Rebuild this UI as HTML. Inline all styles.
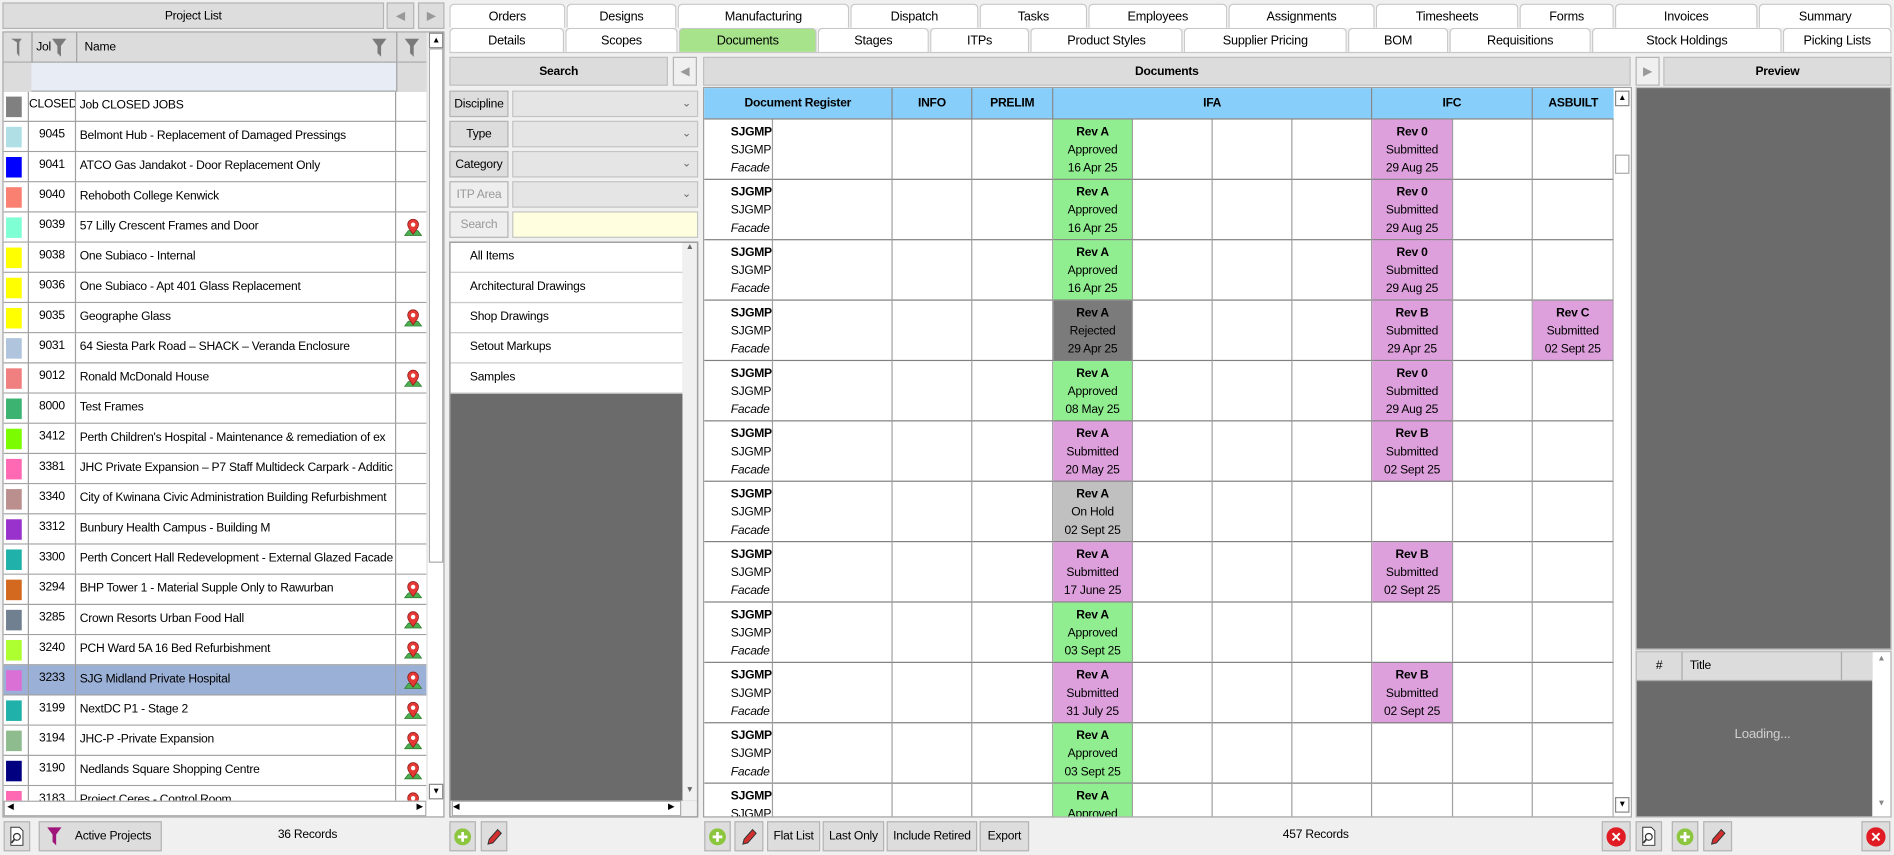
<!DOCTYPE html>
<html><head><meta charset="utf-8"><style>
*{box-sizing:border-box;margin:0;padding:0}
html,body{width:1894px;height:855px;overflow:hidden;background:#f0f0f0}
#s{position:absolute;left:0;top:0;width:1568px;height:708px;transform:scale(1.20791,1.2076);transform-origin:0 0;font-family:"Liberation Sans",sans-serif;font-size:10px;letter-spacing:-0.2px;color:#000;background:#f0f0f0}
.a{position:absolute}
.btn{position:absolute;background:#dddddd;border:1px solid #b4b4b4;display:flex;align-items:center;justify-content:center;white-space:nowrap}
.hd{position:absolute;background:#dcdcdc;border:1px solid #c0c0c0;display:flex;align-items:center;justify-content:center;font-weight:bold}
.tab{position:absolute;height:20px;background:#fff;border:1px solid #c8c8c8;border-bottom:none;border-radius:4px 4px 0 0;display:flex;align-items:center;justify-content:center;font-size:10.5px}
.pr{position:absolute;left:0;width:350px;height:25px;border-bottom:1px solid #a0a0a0;background:#fff}
.pr .sw{position:absolute;left:2px;top:4px;width:13px;height:17px}
.pr .j{position:absolute;left:20px;width:40px;top:0;height:25px;line-height:22px;text-align:center;border-left:1px solid #a0a0a0;border-right:1px solid #a0a0a0;overflow:hidden}
.pr .n{position:absolute;left:60px;width:265px;top:0;height:25px;line-height:24px;padding-left:3px;white-space:nowrap;overflow:hidden;border-right:1px solid #a0a0a0}
.pr svg{position:absolute;left:331px;top:5px}
.dr{position:absolute;left:0;width:753px;height:50px}
.dr>div{position:absolute;top:0;height:50px;border-right:1px solid #a0a0a0;border-bottom:1px solid #808080}
.x0{left:0;width:57px;padding-left:22px;line-height:15px;padding-top:3px;white-space:nowrap;overflow:hidden}
.x1{left:57px;width:99px}.x2{left:156px;width:66px}.x3{left:222px;width:67px}.x4{left:289px;width:66px}.x5{left:355px;width:66px}.x6{left:421px;width:66px}.x7{left:487px;width:66px}.x8{left:553px;width:67px}.x9{left:620px;width:66px}.x10{left:686px;width:67px}
.g{background:#90ee90}.p{background:#dda0dd}.d{background:#7b7b7b}.l{background:#c0c0c0}
.c{text-align:center;line-height:15px;padding-top:3px}
b{font-weight:bold}
.f{position:absolute;left:372px;width:49px;height:22px}
.cb{position:absolute;left:424px;width:154px;height:22px;background:#e5e5e5;border:1px solid #c4c4c4;text-align:right;padding-right:5px;line-height:18px;color:#666;font-size:9px}
.li{position:absolute;left:0;width:192px;height:25px;border-bottom:1px solid #c8c8c8;line-height:24px;padding-left:16px;background:#fff}
</style></head><body><div id="s">
<svg width="0" height="0" style="position:absolute"><defs><g id="pin"><path d="M1 14 L4 10 L12 10 L15 14 Z" fill="#4caf50" stroke="#2a7a2a" stroke-width=".6"/><path d="M8 13 C5 9 3.5 7 3.5 5 A4.5 4.5 0 0 1 12.5 5 C12.5 7 11 9 8 13Z" fill="#e53935" stroke="#8b1a1a" stroke-width=".6"/><circle cx="8" cy="5" r="1.8" fill="#fff"/></g>
<g id="fun"><path d="M0 0H12L7.5 6V15L4.5 12V6Z" fill="#7a7a7a"/></g>
<g id="dsr"><path d="M3 1H10L13 4V16H3Z" fill="#fff" stroke="#333" stroke-width=".8"/><circle cx="8" cy="9" r="2.8" fill="none" stroke="#333" stroke-width="1"/><path d="M6 11L3.5 14" stroke="#333" stroke-width="1.4"/></g>
<g id="add"><circle cx="7" cy="7" r="7" fill="#8cc63f"/><path d="M7 3v8M3 7h8" stroke="#fff" stroke-width="2.2"/></g>
<g id="ed"><path d="M2 13l1-4 7-8 3 3-7 8z" fill="#d32f2f" stroke="#333" stroke-width=".8"/></g>
<g id="del"><circle cx="8" cy="8" r="8" fill="#e01b24"/><path d="M5 5l6 6M11 5l-6 6" stroke="#fff" stroke-width="1.6"/></g>
</defs></svg>

<!-- Left panel -->
<div class="btn" style="left:2px;top:2px;width:316px;height:22px">Project List</div>
<div class="btn" style="left:320px;top:2px;width:23px;height:22px;color:#999">◀</div>
<div class="btn" style="left:346px;top:2px;width:22px;height:22px;color:#999">▶</div>
<div class="a" style="left:2px;top:26px;width:366px;height:651px;border:1px solid #a0a0a0;background:#fff"></div>
<div class="a" style="left:3px;top:27px;width:350px;height:25px;background:#dcdcdc;border-bottom:1px solid #a0a0a0"></div>
<div class="a" style="left:26px;top:27px;width:1px;height:49px;background:#a0a0a0"></div>
<div class="a" style="left:63px;top:27px;width:1px;height:49px;background:#a0a0a0"></div>
<div class="a" style="left:328px;top:27px;width:1px;height:49px;background:#a0a0a0"></div>
<svg class="a" style="left:9px;top:32px" width="10" height="16"><path d="M0 0H9L7 3V15L5 12V3Z" fill="#7a7a7a"/></svg>
<div class="a" style="left:30px;top:34px">Jol</div>
<svg class="a" style="left:43px;top:32px" width="13" height="16"><use href="#fun"/></svg>
<div class="a" style="left:70px;top:34px">Name</div>
<svg class="a" style="left:308px;top:32px" width="13" height="16"><use href="#fun"/></svg>
<svg class="a" style="left:335px;top:32px" width="13" height="16"><use href="#fun"/></svg>
<div class="a" style="left:3px;top:52px;width:350px;height:24px;background:#e8edf5;border-bottom:1px solid #a0a0a0"></div>
<div class="a" style="left:3px;top:52px;width:23px;height:24px;background:#dcdcdc"></div>
<div class="a" style="left:328px;top:52px;width:25px;height:24px;background:#dcdcdc;border-left:1px solid #a0a0a0"></div>
<div class="a" style="left:353px;top:27px;width:14px;height:636px;background:#fff;border-left:1px solid #ddd"><div class="a" style="left:1px;top:0;width:12px;height:13px;border:1px solid #888;font-size:7px;text-align:center;line-height:11px">▲</div><div class="a" style="left:1px;top:13px;width:12px;height:426px;border:1px solid #aaa"></div><div class="a" style="left:1px;top:622px;width:12px;height:13px;border:1px solid #888;font-size:7px;text-align:center;line-height:11px">▼</div></div>
<div class="a" style="left:3px;top:76px;width:350px;height:587px;overflow:hidden">
<div class="pr" style="top:0"><div class="sw" style="background:#808080"></div><div class="j">CLOSED</div><div class="n">Job CLOSED JOBS</div></div>
<div class="pr" style="top:25px"><div class="sw" style="background:#b0e0e6"></div><div class="j">9045</div><div class="n">Belmont Hub - Replacement of Damaged Pressings</div></div>
<div class="pr" style="top:50px"><div class="sw" style="background:#0000ff"></div><div class="j">9041</div><div class="n">ATCO Gas Jandakot - Door Replacement Only</div></div>
<div class="pr" style="top:75px"><div class="sw" style="background:#fa8072"></div><div class="j">9040</div><div class="n">Rehoboth College Kenwick</div></div>
<div class="pr" style="top:100px"><div class="sw" style="background:#7fffd4"></div><div class="j">9039</div><div class="n">57 Lilly Crescent Frames and Door</div><svg width="16" height="15"><use href="#pin"/></svg></div>
<div class="pr" style="top:125px"><div class="sw" style="background:#ffff00"></div><div class="j">9038</div><div class="n">One Subiaco - Internal</div></div>
<div class="pr" style="top:150px"><div class="sw" style="background:#ffff00"></div><div class="j">9036</div><div class="n">One Subiaco - Apt 401 Glass Replacement</div></div>
<div class="pr" style="top:175px"><div class="sw" style="background:#ffff00"></div><div class="j">9035</div><div class="n">Geographe Glass</div><svg width="16" height="15"><use href="#pin"/></svg></div>
<div class="pr" style="top:200px"><div class="sw" style="background:#b0c4de"></div><div class="j">9031</div><div class="n">64 Siesta Park Road – SHACK – Veranda Enclosure</div></div>
<div class="pr" style="top:225px"><div class="sw" style="background:#f08080"></div><div class="j">9012</div><div class="n">Ronald McDonald House</div><svg width="16" height="15"><use href="#pin"/></svg></div>
<div class="pr" style="top:250px"><div class="sw" style="background:#3cb371"></div><div class="j">8000</div><div class="n">Test Frames</div></div>
<div class="pr" style="top:275px"><div class="sw" style="background:#7cfc00"></div><div class="j">3412</div><div class="n">Perth Children's Hospital - Maintenance &amp; remediation of ex</div></div>
<div class="pr" style="top:300px"><div class="sw" style="background:#ff69b4"></div><div class="j">3381</div><div class="n">JHC Private Expansion – P7 Staff Multideck Carpark - Additic</div></div>
<div class="pr" style="top:325px"><div class="sw" style="background:#bc8f8f"></div><div class="j">3340</div><div class="n">City of Kwinana Civic Administration Building Refurbishment</div></div>
<div class="pr" style="top:350px"><div class="sw" style="background:#9932cc"></div><div class="j">3312</div><div class="n">Bunbury Health Campus - Building M</div></div>
<div class="pr" style="top:375px"><div class="sw" style="background:#20b2aa"></div><div class="j">3300</div><div class="n">Perth Concert Hall Redevelopment - External Glazed Facade</div></div>
<div class="pr" style="top:400px"><div class="sw" style="background:#d2691e"></div><div class="j">3294</div><div class="n">BHP Tower 1 - Material Supple Only to Rawurban</div><svg width="16" height="15"><use href="#pin"/></svg></div>
<div class="pr" style="top:425px"><div class="sw" style="background:#708090"></div><div class="j">3285</div><div class="n">Crown Resorts Urban Food Hall</div><svg width="16" height="15"><use href="#pin"/></svg></div>
<div class="pr" style="top:450px"><div class="sw" style="background:#adff2f"></div><div class="j">3240</div><div class="n">PCH Ward 5A 16 Bed Refurbishment</div><svg width="16" height="15"><use href="#pin"/></svg></div>
<div class="pr" style="top:475px;background:#9bb0d6"><div class="sw" style="background:#da70d6"></div><div class="j">3233</div><div class="n">SJG Midland Private Hospital</div><svg width="16" height="15"><use href="#pin"/></svg></div>
<div class="pr" style="top:500px"><div class="sw" style="background:#20b2aa"></div><div class="j">3199</div><div class="n">NextDC P1 - Stage 2</div><svg width="16" height="15"><use href="#pin"/></svg></div>
<div class="pr" style="top:525px"><div class="sw" style="background:#8fbc8f"></div><div class="j">3194</div><div class="n">JHC-P -Private Expansion</div><svg width="16" height="15"><use href="#pin"/></svg></div>
<div class="pr" style="top:550px"><div class="sw" style="background:#000080"></div><div class="j">3190</div><div class="n">Nedlands Square Shopping Centre</div><svg width="16" height="15"><use href="#pin"/></svg></div>
<div class="pr" style="top:575px"><div class="sw" style="background:#ff69b4"></div><div class="j">3183</div><div class="n">Project Ceres - Control Room</div><svg width="16" height="15"><use href="#pin"/></svg></div>
</div>
<div class="a" style="left:3px;top:663px;width:350px;height:13px;background:#fff;border:1px solid #aaa"><span class="a" style="left:2px;top:0;font-size:7px">◀</span><span class="a" style="right:2px;top:0;font-size:7px">▶</span></div>
<div class="btn" style="left:3px;top:680px;width:22px;height:25px"><svg width="16" height="17"><use href="#dsr"/></svg></div>
<div class="btn" style="left:32px;top:680px;width:102px;height:25px;justify-content:flex-start;padding-left:6px"><svg width="13" height="16" style="margin-right:10px"><path d="M0 0H12L7.5 6V15L4.5 12V6Z" fill="#a0157a"/></svg>Active Projects</div>
<div class="a" style="left:230px;top:686px">36 Records</div>

<!-- Tabs -->
<div class="tab" style="left:372px;top:3px;width:96px">Orders</div>
<div class="tab" style="left:469px;top:3px;width:91px">Designs</div>
<div class="tab" style="left:561px;top:3px;width:142px">Manufacturing</div>
<div class="tab" style="left:704px;top:3px;width:106px">Dispatch</div>
<div class="tab" style="left:811px;top:3px;width:89px">Tasks</div>
<div class="tab" style="left:901px;top:3px;width:115px">Employees</div>
<div class="tab" style="left:1017px;top:3px;width:121px">Assignments</div>
<div class="tab" style="left:1139px;top:3px;width:118px">Timesheets</div>
<div class="tab" style="left:1258px;top:3px;width:78px">Forms</div>
<div class="tab" style="left:1337px;top:3px;width:118px">Invoices</div>
<div class="tab" style="left:1456px;top:3px;width:110px">Summary</div>
<div class="tab" style="left:372px;top:23px;width:95px">Details</div>
<div class="tab" style="left:468px;top:23px;width:93px">Scopes</div>
<div class="tab" style="left:562px;top:23px;width:114px;background:#a6e38a">Documents</div>
<div class="tab" style="left:677px;top:23px;width:92px">Stages</div>
<div class="tab" style="left:770px;top:23px;width:82px">ITPs</div>
<div class="tab" style="left:853px;top:23px;width:126px">Product Styles</div>
<div class="tab" style="left:980px;top:23px;width:135px">Supplier Pricing</div>
<div class="tab" style="left:1116px;top:23px;width:83px">BOM</div>
<div class="tab" style="left:1200px;top:23px;width:117px">Requisitions</div>
<div class="tab" style="left:1318px;top:23px;width:157px">Stock Holdings</div>
<div class="tab" style="left:1476px;top:23px;width:90px">Picking Lists</div>
<div class="a" style="left:372px;top:43px;width:1194px;height:1px;background:#c8c8c8"></div>

<!-- Search panel -->
<div class="hd" style="left:372px;top:47px;width:181px;height:24px">Search</div>
<div class="btn" style="left:557px;top:47px;width:20px;height:24px;color:#999;background:#f0f0f0">◀</div>
<div class="btn f" style="top:75px">Discipline</div><div class="cb" style="top:75px">⌄</div>
<div class="btn f" style="top:100px">Type</div><div class="cb" style="top:100px">⌄</div>
<div class="btn f" style="top:125px">Category</div><div class="cb" style="top:125px">⌄</div>
<div class="btn f" style="top:150px;color:#999;background:#eee">ITP Area</div><div class="cb" style="top:150px">⌄</div>
<div class="btn f" style="top:175px;color:#999;background:#eee">Search</div><div class="cb" style="top:175px;background:#ffffe0"></div>
<div class="a" style="left:372px;top:200px;width:206px;height:477px;border:1px solid #a0a0a0;background:#6b6b6b;overflow:hidden">
<div class="li" style="top:0">All Items</div><div class="li" style="top:25px">Architectural Drawings</div><div class="li" style="top:50px">Shop Drawings</div><div class="li" style="top:75px">Setout Markups</div><div class="li" style="top:100px">Samples</div>
<div class="a" style="left:192px;top:0;width:12px;height:462px;background:#f0f0f0;font-size:7px;color:#666;text-align:center"><div>▲</div><div class="a" style="top:450px;width:12px">▼</div></div>
<div class="a" style="left:0;top:462px;width:204px;height:13px;background:#f0f0f0"><div class="a" style="left:1px;top:0;width:190px;height:13px;background:#fff;border:1px solid #aaa;font-size:7px">◀</div><span class="a" style="left:180px;top:1px;font-size:7px">▶</span></div>
</div>
<div class="btn" style="left:372px;top:680px;width:22px;height:25px"><svg width="14" height="14"><use href="#add"/></svg></div>
<div class="btn" style="left:398px;top:680px;width:22px;height:25px"><svg width="14" height="14"><use href="#ed"/></svg></div>

<!-- Documents -->
<div class="hd" style="left:582px;top:47px;width:768px;height:24px">Documents</div>
<div class="a" style="left:582px;top:72px;width:769px;height:605px;border:1px solid #a0a0a0;background:#fff"></div>
<div class="a" style="left:583px;top:73px;width:753px;height:25px;background:#87cefa;font-weight:bold">
<div class="a" style="left:0;width:156px;height:25px;line-height:25px;text-align:center;border-right:1px solid #888">Document Register</div>
<div class="a" style="left:156px;width:66px;height:25px;line-height:25px;text-align:center;border-right:1px solid #888">INFO</div>
<div class="a" style="left:222px;width:67px;height:25px;line-height:25px;text-align:center;border-right:1px solid #888">PRELIM</div>
<div class="a" style="left:289px;width:264px;height:25px;line-height:25px;text-align:center;border-right:1px solid #888">IFA</div>
<div class="a" style="left:553px;width:133px;height:25px;line-height:25px;text-align:center;border-right:1px solid #888">IFC</div>
<div class="a" style="left:686px;width:67px;height:25px;line-height:25px;text-align:center">ASBUILT</div>
</div>
<div class="a" style="left:583px;top:98px;width:753px;height:578px;overflow:hidden;border-top:1px solid #808080">
<div class="dr" style="top:0"><div class="x0"><b>SJGMPH</b><br>SJGMPH<br><i>Facade</i></div><div class="x1"></div><div class="x2"></div><div class="x3"></div><div class="x4 g c"><b>Rev A</b><br>Approved<br>16 Apr 25</div><div class="x5"></div><div class="x6"></div><div class="x7"></div><div class="x8 p c"><b>Rev 0</b><br>Submitted<br>29 Aug 25</div><div class="x9"></div><div class="x10"></div></div>
<div class="dr" style="top:50px"><div class="x0"><b>SJGMPH</b><br>SJGMPH<br><i>Facade</i></div><div class="x1"></div><div class="x2"></div><div class="x3"></div><div class="x4 g c"><b>Rev A</b><br>Approved<br>16 Apr 25</div><div class="x5"></div><div class="x6"></div><div class="x7"></div><div class="x8 p c"><b>Rev 0</b><br>Submitted<br>29 Aug 25</div><div class="x9"></div><div class="x10"></div></div>
<div class="dr" style="top:100px"><div class="x0"><b>SJGMPH</b><br>SJGMPH<br><i>Facade</i></div><div class="x1"></div><div class="x2"></div><div class="x3"></div><div class="x4 g c"><b>Rev A</b><br>Approved<br>16 Apr 25</div><div class="x5"></div><div class="x6"></div><div class="x7"></div><div class="x8 p c"><b>Rev 0</b><br>Submitted<br>29 Aug 25</div><div class="x9"></div><div class="x10"></div></div>
<div class="dr" style="top:150px"><div class="x0"><b>SJGMPH</b><br>SJGMPH<br><i>Facade</i></div><div class="x1"></div><div class="x2"></div><div class="x3"></div><div class="x4 d c"><b>Rev A</b><br>Rejected<br>29 Apr 25</div><div class="x5"></div><div class="x6"></div><div class="x7"></div><div class="x8 p c"><b>Rev B</b><br>Submitted<br>29 Apr 25</div><div class="x9"></div><div class="x10 p c"><b>Rev C</b><br>Submitted<br>02 Sept 25</div></div>
<div class="dr" style="top:200px"><div class="x0"><b>SJGMPH</b><br>SJGMPH<br><i>Facade</i></div><div class="x1"></div><div class="x2"></div><div class="x3"></div><div class="x4 g c"><b>Rev A</b><br>Approved<br>08 May 25</div><div class="x5"></div><div class="x6"></div><div class="x7"></div><div class="x8 p c"><b>Rev 0</b><br>Submitted<br>29 Aug 25</div><div class="x9"></div><div class="x10"></div></div>
<div class="dr" style="top:250px"><div class="x0"><b>SJGMPH</b><br>SJGMPH<br><i>Facade</i></div><div class="x1"></div><div class="x2"></div><div class="x3"></div><div class="x4 p c"><b>Rev A</b><br>Submitted<br>20 May 25</div><div class="x5"></div><div class="x6"></div><div class="x7"></div><div class="x8 p c"><b>Rev B</b><br>Submitted<br>02 Sept 25</div><div class="x9"></div><div class="x10"></div></div>
<div class="dr" style="top:300px"><div class="x0"><b>SJGMPH</b><br>SJGMPH<br><i>Facade</i></div><div class="x1"></div><div class="x2"></div><div class="x3"></div><div class="x4 l c"><b>Rev A</b><br>On Hold<br>02 Sept 25</div><div class="x5"></div><div class="x6"></div><div class="x7"></div><div class="x8"></div><div class="x9"></div><div class="x10"></div></div>
<div class="dr" style="top:350px"><div class="x0"><b>SJGMPH</b><br>SJGMPH<br><i>Facade</i></div><div class="x1"></div><div class="x2"></div><div class="x3"></div><div class="x4 p c"><b>Rev A</b><br>Submitted<br>17 June 25</div><div class="x5"></div><div class="x6"></div><div class="x7"></div><div class="x8 p c"><b>Rev B</b><br>Submitted<br>02 Sept 25</div><div class="x9"></div><div class="x10"></div></div>
<div class="dr" style="top:400px"><div class="x0"><b>SJGMPH</b><br>SJGMPH<br><i>Facade</i></div><div class="x1"></div><div class="x2"></div><div class="x3"></div><div class="x4 g c"><b>Rev A</b><br>Approved<br>03 Sept 25</div><div class="x5"></div><div class="x6"></div><div class="x7"></div><div class="x8"></div><div class="x9"></div><div class="x10"></div></div>
<div class="dr" style="top:450px"><div class="x0"><b>SJGMPH</b><br>SJGMPH<br><i>Facade</i></div><div class="x1"></div><div class="x2"></div><div class="x3"></div><div class="x4 p c"><b>Rev A</b><br>Submitted<br>31 July 25</div><div class="x5"></div><div class="x6"></div><div class="x7"></div><div class="x8 p c"><b>Rev B</b><br>Submitted<br>02 Sept 25</div><div class="x9"></div><div class="x10"></div></div>
<div class="dr" style="top:500px"><div class="x0"><b>SJGMPH</b><br>SJGMPH<br><i>Facade</i></div><div class="x1"></div><div class="x2"></div><div class="x3"></div><div class="x4 g c"><b>Rev A</b><br>Approved<br>03 Sept 25</div><div class="x5"></div><div class="x6"></div><div class="x7"></div><div class="x8"></div><div class="x9"></div><div class="x10"></div></div>
<div class="dr" style="top:550px"><div class="x0"><b>SJGMPH</b><br>SJGMPH<br><i>Facade</i></div><div class="x1"></div><div class="x2"></div><div class="x3"></div><div class="x4 g c"><b>Rev A</b><br>Approved<br>03 Sept 25</div><div class="x5"></div><div class="x6"></div><div class="x7"></div><div class="x8"></div><div class="x9"></div><div class="x10"></div></div>
</div>
<div class="a" style="left:1336px;top:73px;width:14px;height:603px;background:#fff"><div class="a" style="left:1px;top:2px;width:12px;height:13px;border:1px solid #888;font-size:7px;text-align:center;line-height:11px">▲</div><div class="a" style="left:1px;top:55px;width:12px;height:16px;border:1px solid #aaa"></div><div class="a" style="left:1px;top:587px;width:12px;height:13px;border:1px solid #888;font-size:7px;text-align:center;line-height:11px">▼</div></div>
<div class="btn" style="left:583px;top:680px;width:22px;height:25px"><svg width="14" height="14"><use href="#add"/></svg></div>
<div class="btn" style="left:608px;top:680px;width:24px;height:25px"><svg width="14" height="14"><use href="#ed"/></svg></div>
<div class="btn" style="left:635px;top:680px;width:44px;height:25px">Flat List</div>
<div class="btn" style="left:681px;top:680px;width:51px;height:25px">Last Only</div>
<div class="btn" style="left:734px;top:680px;width:75px;height:25px">Include Retired</div>
<div class="btn" style="left:811px;top:680px;width:41px;height:25px">Export</div>
<div class="a" style="left:1062px;top:686px">457 Records</div>
<div class="btn" style="left:1326px;top:680px;width:24px;height:25px"><svg width="16" height="16"><use href="#del"/></svg></div>

<!-- Preview -->
<div class="btn" style="left:1354px;top:47px;width:20px;height:24px;color:#999;background:#f0f0f0">▶</div>
<div class="hd" style="left:1377px;top:47px;width:189px;height:24px">Preview</div>
<div class="a" style="left:1354px;top:72px;width:212px;height:466px;background:#6b6b6b;border:1px solid #c0c0c0"></div>
<div class="a" style="left:1354px;top:539px;width:212px;height:138px;background:#6b6b6b;border:1px solid #c0c0c0"></div>
<div class="a" style="left:1355px;top:540px;width:195px;height:24px;background:#dcdcdc;border-bottom:1px solid #aaa"><div class="a" style="left:0;width:38px;height:23px;line-height:23px;text-align:center;border-right:1px solid #aaa">#</div><div class="a" style="left:38px;width:132px;height:23px;line-height:23px;padding-left:6px;border-right:1px solid #aaa">Title</div></div>
<div class="a" style="left:1550px;top:540px;width:15px;height:136px;background:#fff;font-size:7px;color:#888;text-align:center"><div style="margin-top:2px">▲</div><div class="a" style="top:122px;width:15px">▼</div></div>
<div class="a" style="left:1436px;top:602px;color:#d0d0d0;font-size:11px">Loading...</div>
<div class="btn" style="left:1354px;top:680px;width:22px;height:25px"><svg width="16" height="17"><use href="#dsr"/></svg></div>
<div class="btn" style="left:1384px;top:680px;width:22px;height:25px"><svg width="14" height="14"><use href="#add"/></svg></div>
<div class="btn" style="left:1410px;top:680px;width:24px;height:25px"><svg width="14" height="14"><use href="#ed"/></svg></div>
<div class="btn" style="left:1541px;top:680px;width:24px;height:25px"><svg width="16" height="16"><use href="#del"/></svg></div>
</div></body></html>
